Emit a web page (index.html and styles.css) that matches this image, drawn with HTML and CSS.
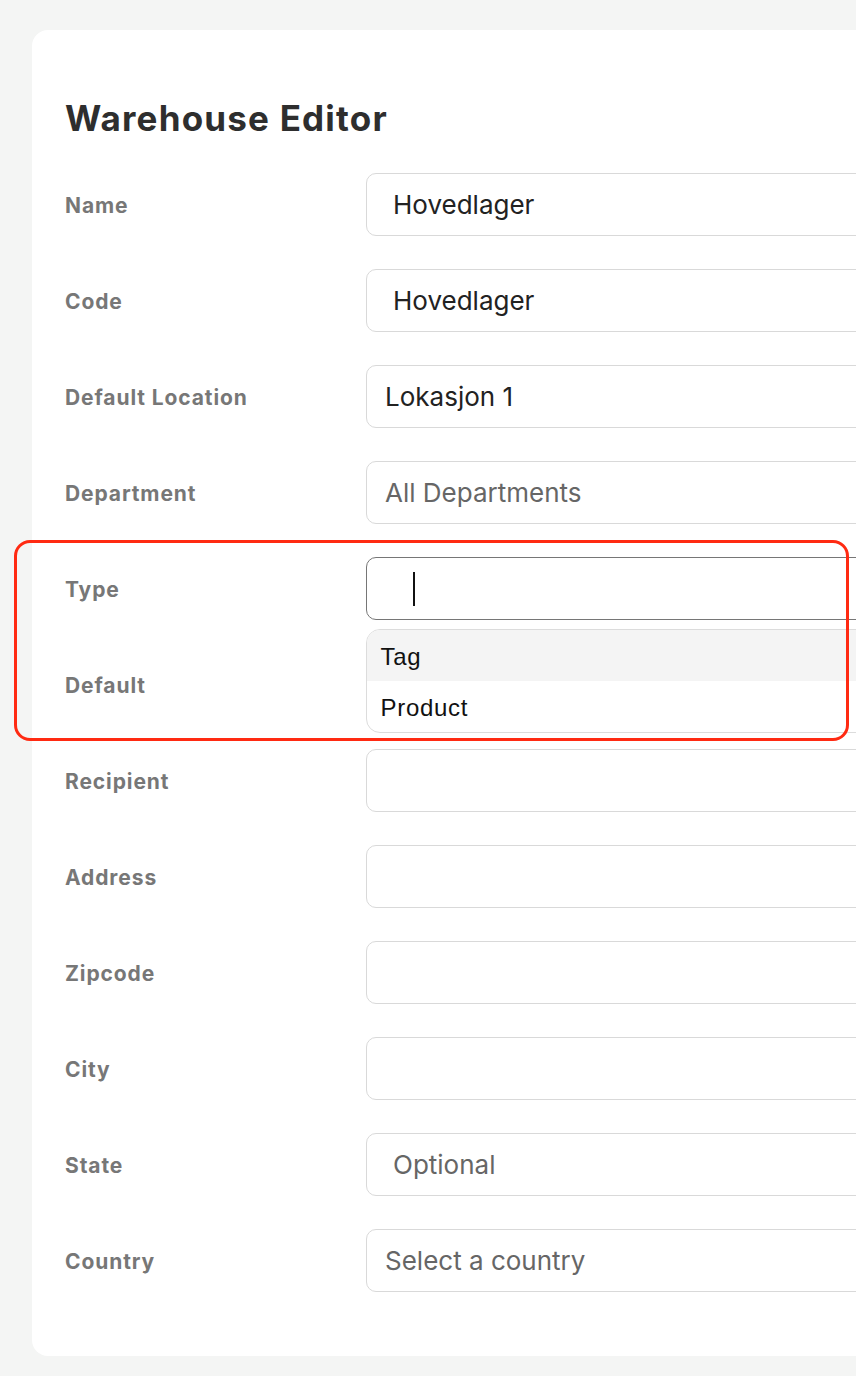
FILE: index.html
```html
<!DOCTYPE html>
<html lang="en">
<head>
<meta charset="utf-8">
<title>Warehouse Editor</title>
<link rel="stylesheet" href="styles.css">
</head>
<body>
<main class="card">
  <h1 class="title">Warehouse Editor</h1>
  <div class="form">
    <div class="row">
      <label class="label">Name</label>
      <div class="field"><span class="value">Hovedlager</span></div>
    </div>
    <div class="row">
      <label class="label">Code</label>
      <div class="field"><span class="value">Hovedlager</span></div>
    </div>
    <div class="row">
      <label class="label">Default Location</label>
      <div class="field select"><span class="value">Lokasjon 1</span></div>
    </div>
    <div class="row">
      <label class="label">Department</label>
      <div class="field select"><span class="value muted">All Departments</span></div>
    </div>
    <div class="row row-type">
      <label class="label">Type</label>
      <div class="field focused">
        <span class="caret"></span>
        <ul class="menu">
          <li class="option active">Tag</li>
          <li class="option">Product</li>
        </ul>
      </div>
      <div class="highlight"></div>
    </div>
    <div class="row">
      <label class="label">Default</label>
      <div class="field"></div>
    </div>
    <div class="row">
      <label class="label">Recipient</label>
      <div class="field"></div>
    </div>
    <div class="row">
      <label class="label">Address</label>
      <div class="field"></div>
    </div>
    <div class="row">
      <label class="label">Zipcode</label>
      <div class="field"></div>
    </div>
    <div class="row">
      <label class="label">City</label>
      <div class="field"></div>
    </div>
    <div class="row">
      <label class="label">State</label>
      <div class="field"><span class="value muted">Optional</span></div>
    </div>
    <div class="row">
      <label class="label">Country</label>
      <div class="field select"><span class="value muted">Select a country</span></div>
    </div>
  </div>
</main>
</body>
</html>
```

FILE: styles.css
```css
html, body {
  margin: 0;
  padding: 0;
  overflow: hidden;
}

body {
  background: #f4f5f4;
  font-family: Inter, "Noto Sans", sans-serif;
  height: 1376px;
}

.card {
  margin: 30px 0 0 32px;
  width: 1000px;
  background: #ffffff;
  border-radius: 16px;
  padding: 68px 0 64px 33px;
  box-sizing: border-box;
}

.title {
  margin: 0 0 35px;
  font-size: 35px;
  line-height: 40px;
  font-weight: 700;
  color: #2e2e2e;
  letter-spacing: 1.2px;
}

.form {
  display: flex;
  flex-direction: column;
  gap: 33px;
}

.row {
  display: grid;
  grid-template-columns: 301px 1fr;
  align-items: center;
  height: 63px;
}

.label {
  font-size: 21px;
  font-weight: 700;
  color: #777777;
  letter-spacing: 0.9px;
  padding-top: 1px;
}

.field {
  position: relative;
  height: 63px;
  box-sizing: border-box;
  border: 1.5px solid #d9d9d9;
  border-radius: 10px;
  background: #fff;
  display: flex;
  align-items: center;
  padding-left: 26px;
}

.field.select {
  padding-left: 18px;
}

.value {
  font-size: 26px;
  color: #222;
}

.value.muted {
  color: #666;
}

.field.focused {
  border-color: #767676;
}

.caret {
  display: block;
  width: 2px;
  height: 34px;
  background: #111;
  margin-left: 20px;
}

.menu {
  position: absolute;
  left: -1.5px;
  right: -1.5px;
  top: 71px;
  margin: 0;
  padding: 0;
  list-style: none;
  border: 1.5px solid #dcdcdc;
  border-radius: 14px;
  background: #fff;
  overflow: hidden;
  z-index: 2;
}

.option {
  height: 51px;
  display: flex;
  align-items: center;
  padding: 3px 0 0 14px;
  box-sizing: border-box;
  font-family: "Liberation Sans", Arial, sans-serif;
  font-size: 24px;
  letter-spacing: 0.7px;
  color: #111;
}

.option.active {
  background: #f4f4f4;
}

.row-type {
  position: relative;
}

.highlight {
  position: absolute;
  left: -51px;
  top: -17px;
  width: 835px;
  height: 201px;
  box-sizing: border-box;
  border: 3px solid #ff2a12;
  border-radius: 16px;
  z-index: 3;
  pointer-events: none;
}
```
